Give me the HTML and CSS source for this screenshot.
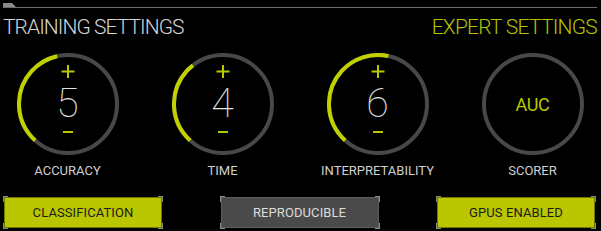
FILE: index.html
```html
<!DOCTYPE html>
<html>
<head>
<meta charset="utf-8">
<link rel="stylesheet" href="styles.css">
</head>
<body>
<div class="page">
  <div class="topbar"><div class="tab"></div></div>
  <div class="header">
    <div class="title">TRAINING SETTINGS</div>
    <div class="title expert">EXPERT SETTINGS</div>
  </div>
  <div class="gauges">
    <div class="gauge">
      <div class="dial">
        <svg class="ring" width="102" height="102" viewBox="0 0 102 102">
          <circle cx="51" cy="51" r="49" class="track"/>
          <circle cx="51" cy="51" r="49" class="arc" stroke-dasharray="106.9 400" transform="rotate(132 51 51)"/>
          <path d="M44.5 18.5h13M51 12v13" class="sign"/>
          <path d="M46 79h10" class="sign"/>
        </svg>
        <span class="value">5</span>
      </div>
      <div class="label">ACCURACY</div>
    </div>
    <div class="gauge">
      <div class="dial">
        <svg class="ring" width="102" height="102" viewBox="0 0 102 102">
          <circle cx="51" cy="51" r="49" class="track"/>
          <circle cx="51" cy="51" r="49" class="arc" stroke-dasharray="85.5 400" transform="rotate(132 51 51)"/>
          <path d="M44.5 18.5h13M51 12v13" class="sign"/>
          <path d="M46 79h10" class="sign"/>
        </svg>
        <span class="value">4</span>
      </div>
      <div class="label">TIME</div>
    </div>
    <div class="gauge">
      <div class="dial">
        <svg class="ring" width="102" height="102" viewBox="0 0 102 102">
          <circle cx="51" cy="51" r="49" class="track"/>
          <circle cx="51" cy="51" r="49" class="arc" stroke-dasharray="128.3 400" transform="rotate(132 51 51)"/>
          <path d="M44.5 18.5h13M51 12v13" class="sign"/>
          <path d="M46 79h10" class="sign"/>
        </svg>
        <span class="value">6</span>
      </div>
      <div class="label">INTERPRETABILITY</div>
    </div>
    <div class="gauge">
      <div class="dial">
        <svg class="ring" width="102" height="102" viewBox="0 0 102 102">
          <circle cx="51" cy="51" r="49" class="track"/>
        </svg>
        <span class="scorer">AUC</span>
      </div>
      <div class="label">SCORER</div>
    </div>
  </div>
  <div class="buttons">
    <div class="btn on"><span class="btn-face">CLASSIFICATION</span></div>
    <div class="btn off"><span class="btn-face">REPRODUCIBLE</span></div>
    <div class="btn on"><span class="btn-face">GPUS ENABLED</span></div>
  </div>
</div>
</body>
</html>
```
FILE: styles.css
```css
html, body {
  margin: 0;
  padding: 0;
  background: #000;
}
body {
  width: 601px;
  height: 231px;
  overflow: hidden;
  font-family: "Roboto", "Liberation Sans", sans-serif;
}
.page {
  padding: 3px 4px 0 3px;
}
.topbar {
  height: 4px;
  border-bottom: 1px solid #6e6e6e;
  display: flex;
}
.tab {
  width: 13px;
  height: 4px;
  background: #8a8a8a;
  clip-path: polygon(0 0, 9px 0, 13px 100%, 0 100%);
}
.header {
  display: flex;
  justify-content: space-between;
  margin-top: 6px;
  height: 26px;
  align-items: center;
}
.title {
  font-size: 21px;
  font-weight: 300;
  color: #d4d4d4;
  letter-spacing: -0.95px;
  line-height: 24px;
}
.title.expert {
  color: #b4c300;
  letter-spacing: -0.75px;
}
.gauges {
  display: grid;
  grid-template-columns: repeat(4, 102px);
  column-gap: 53px;
  padding-left: 13.5px;
  margin-top: 13px;
}
.gauge {
  display: flex;
  flex-direction: column;
  align-items: center;
}
.dial {
  position: relative;
  width: 102px;
  height: 102px;
  display: flex;
  align-items: center;
  justify-content: center;
}
.ring {
  position: absolute;
  left: 0;
  top: 0;
}
.track {
  fill: none;
  stroke: #484848;
  stroke-width: 4;
}
.arc {
  fill: none;
  stroke: #c2d000;
  stroke-width: 4;
}
.sign {
  fill: none;
  stroke: #b9c800;
  stroke-width: 2;
}
.value {
  position: relative;
  font-size: 41px;
  font-weight: 100;
  color: #e2e2e2;
  line-height: 1;
  margin-top: -2px;
}
.scorer {
  position: relative;
  font-size: 18px;
  font-weight: 400;
  color: #b8c700;
  letter-spacing: -0.3px;
}
.label {
  margin-top: 8px;
  font-size: 13px;
  color: #cfcfcf;
  line-height: 16px;
}
.buttons {
  display: flex;
  justify-content: space-between;
  margin-top: 17px;
  padding-right: 1px;
}
.btn {
  width: 160px;
  height: 33px;
  box-sizing: border-box;
  padding: 1px;
  display: flex;
  background:
    linear-gradient(#8c8c8c, #8c8c8c) left top / 1px 6px no-repeat,
    linear-gradient(#8c8c8c, #8c8c8c) left top / 5px 1px no-repeat,
    linear-gradient(#8c8c8c, #8c8c8c) right top / 1px 6px no-repeat,
    linear-gradient(#8c8c8c, #8c8c8c) right top / 5px 1px no-repeat,
    linear-gradient(#8c8c8c, #8c8c8c) left bottom / 1px 6px no-repeat,
    linear-gradient(#8c8c8c, #8c8c8c) left bottom / 5px 1px no-repeat,
    linear-gradient(#8c8c8c, #8c8c8c) right bottom / 1px 6px no-repeat,
    linear-gradient(#8c8c8c, #8c8c8c) right bottom / 5px 1px no-repeat;
}
.btn-face {
  flex: 1;
  display: flex;
  align-items: center;
  justify-content: center;
  font-size: 13px;
  font-weight: 400;
  letter-spacing: 0.1px;
}
.btn.on .btn-face {
  background: #b9c600;
  border: 1px solid #6f7800;
  color: #1c1c1c;
}
.btn.off .btn-face {
  background: #4a4a4a;
  border: 1px solid #5e5e5e;
  color: #dcdcdc;
}
```
